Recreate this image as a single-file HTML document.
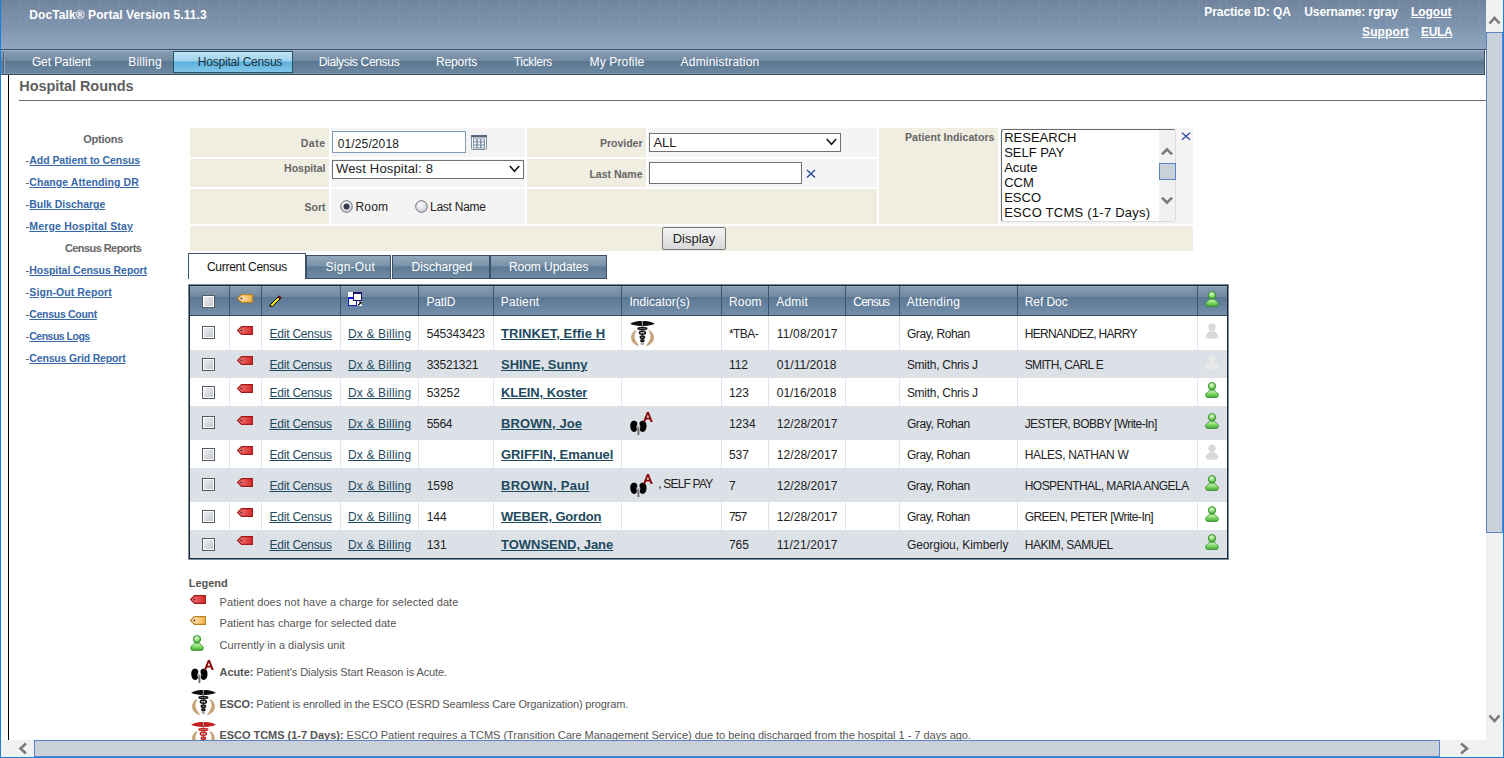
<!DOCTYPE html><html><head><meta charset="utf-8"><title>DocTalk Portal - Hospital Rounds</title><style>
html,body{margin:0;padding:0;}
body{width:1504px;height:758px;overflow:hidden;position:relative;background:#fff;font-family:"Liberation Sans",sans-serif;}
.t{position:absolute;white-space:pre;}
.b{position:absolute;}
.u{text-decoration:underline;}
</style></head><body>
<div class="b" style="left:1px;top:0px;width:1485px;height:49px;background:linear-gradient(#71849d,#7d93ad 50%,#8ea6c0);"></div>
<svg class="b" style="left:1px;top:0px" width="1485" height="49" viewBox="0 0 1485 49"><defs><pattern id="sq" width="20" height="18" patternUnits="userSpaceOnUse" x="4" y="-5"><rect x="1.5" y="1.5" width="13" height="13" rx="3" fill="none" stroke="#ffffff" stroke-opacity="0.045" stroke-width="1"/></pattern></defs><rect width="1485" height="49" fill="url(#sq)"/></svg>
<div class="b" style="left:1px;top:49px;width:1485px;height:1px;background:#3c5068;"></div>
<div class="t" style="left:29.3px;top:8px;font-size:12px;line-height:14px;font-weight:bold;color:#fff;letter-spacing:0.093px;">DocTalk® Portal Version 5.11.3</div>
<div class="t" style="left:1204.3px;top:5px;font-size:12px;line-height:14px;font-weight:bold;color:#fff;letter-spacing:-0.057px;">Practice ID: QA</div>
<div class="t" style="left:1304.3px;top:5px;font-size:12px;line-height:14px;font-weight:bold;color:#fff;letter-spacing:-0.129px;">Username: rgray</div>
<div class="t" style="left:1411px;top:5px;font-size:12px;line-height:14px;font-weight:bold;color:#fff;letter-spacing:-0.04px;text-decoration:underline;">Logout</div>
<div class="t" style="left:1362px;top:25px;font-size:12px;line-height:14px;font-weight:bold;color:#fff;letter-spacing:0.133px;text-decoration:underline;">Support</div>
<div class="t" style="left:1421px;top:25px;font-size:12px;line-height:14px;font-weight:bold;color:#fff;letter-spacing:-0.333px;text-decoration:underline;">EULA</div>
<div class="b" style="left:1px;top:50px;width:1484px;height:24px;background:linear-gradient(#9fb1c3 0px,#9fb1c3 1px,#8a9db2 1px,#7089a1 11px,#5a7690 11px,#6d89a1 23px,#7f97ad 23px);"></div>
<div class="b" style="left:1px;top:74px;width:1484px;height:1px;background:#3a4e66;"></div>
<div class="b" style="left:1484px;top:50px;width:1px;height:25px;background:#3a4e66;"></div>
<div class="b" style="left:3px;top:52px;width:1px;height:21px;background:#4a6480;"></div>
<div class="b" style="left:4px;top:52px;width:1px;height:21px;background:#8da2b6;"></div>
<div class="b" style="left:173px;top:51px;width:120px;height:22px;box-sizing:border-box;border:1px solid #1c5660;background:linear-gradient(#c2e3f5,#9fd2ee 45%,#5cb0dc 50%,#82c6e8 100%);"></div>
<div class="t" style="left:31.9px;top:55px;font-size:12px;line-height:14px;font-weight:normal;color:#fff;letter-spacing:-0.1px;">Get Patient</div>
<div class="t" style="left:128.2px;top:55px;font-size:12px;line-height:14px;font-weight:normal;color:#fff;letter-spacing:0.233px;">Billing</div>
<div class="t" style="left:318.7px;top:55px;font-size:12px;line-height:14px;font-weight:normal;color:#fff;letter-spacing:-0.314px;">Dialysis Census</div>
<div class="t" style="left:435.9px;top:55px;font-size:12px;line-height:14px;font-weight:normal;color:#fff;letter-spacing:-0.1px;">Reports</div>
<div class="t" style="left:513.8px;top:55px;font-size:12px;line-height:14px;font-weight:normal;color:#fff;letter-spacing:-0.343px;">Ticklers</div>
<div class="t" style="left:589.6px;top:55px;font-size:12px;line-height:14px;font-weight:normal;color:#fff;letter-spacing:0.133px;">My Profile</div>
<div class="t" style="left:680.6px;top:55px;font-size:12px;line-height:14px;font-weight:normal;color:#fff;letter-spacing:0.2px;">Administration</div>
<div class="t" style="left:197.7px;top:55px;font-size:12px;line-height:14px;font-weight:normal;color:#15323c;letter-spacing:-0.193px;">Hospital Census</div>
<div class="b" style="left:8px;top:75px;width:1px;height:665px;background:#000;"></div>
<div class="t" style="left:19.3px;top:78px;font-size:14.5px;line-height:17px;font-weight:bold;color:#606060;letter-spacing:-0.064px;">Hospital Rounds</div>
<div class="b" style="left:19px;top:100px;width:1467px;height:1px;background:#6e6e6e;"></div>
<div class="t" style="left:-196.8px;width:600px;text-align:center;top:133px;font-size:11px;line-height:13px;font-weight:bold;color:#666;letter-spacing:-0.233px;">Options</div>
<div class="t" style="left:25.5px;top:154px;font-size:11px;line-height:13px;font-weight:normal;color:#444;">-</div>
<div class="t" style="left:29.3px;top:154px;font-size:10.5px;line-height:13px;font-weight:bold;color:#3768a8;letter-spacing:-0.055px;text-decoration:underline;">Add Patient to Census</div>
<div class="t" style="left:25.5px;top:176px;font-size:11px;line-height:13px;font-weight:normal;color:#444;">-</div>
<div class="t" style="left:29.3px;top:176px;font-size:10.5px;line-height:13px;font-weight:bold;color:#3768a8;letter-spacing:0.078px;text-decoration:underline;">Change Attending DR</div>
<div class="t" style="left:25.5px;top:198px;font-size:11px;line-height:13px;font-weight:normal;color:#444;">-</div>
<div class="t" style="left:29.3px;top:198px;font-size:10.5px;line-height:13px;font-weight:bold;color:#3768a8;letter-spacing:-0.031px;text-decoration:underline;">Bulk Discharge</div>
<div class="t" style="left:25.5px;top:220px;font-size:11px;line-height:13px;font-weight:normal;color:#444;">-</div>
<div class="t" style="left:29.3px;top:220px;font-size:10.5px;line-height:13px;font-weight:bold;color:#3768a8;letter-spacing:0.178px;text-decoration:underline;">Merge Hospital Stay</div>
<div class="t" style="left:-196.9px;width:600px;text-align:center;top:242px;font-size:11px;line-height:13px;font-weight:bold;color:#666;letter-spacing:-0.569px;">Census Reports</div>
<div class="t" style="left:25.5px;top:264px;font-size:11px;line-height:13px;font-weight:normal;color:#444;">-</div>
<div class="t" style="left:29.3px;top:264px;font-size:10.5px;line-height:13px;font-weight:bold;color:#3768a8;letter-spacing:-0.057px;text-decoration:underline;">Hospital Census Report</div>
<div class="t" style="left:25.5px;top:286px;font-size:11px;line-height:13px;font-weight:normal;color:#444;">-</div>
<div class="t" style="left:29.3px;top:286px;font-size:10.5px;line-height:13px;font-weight:bold;color:#3768a8;letter-spacing:0.093px;text-decoration:underline;">Sign-Out Report</div>
<div class="t" style="left:25.5px;top:308px;font-size:11px;line-height:13px;font-weight:normal;color:#444;">-</div>
<div class="t" style="left:29.3px;top:308px;font-size:10.5px;line-height:13px;font-weight:bold;color:#3768a8;letter-spacing:-0.3px;text-decoration:underline;">Census Count</div>
<div class="t" style="left:25.5px;top:330px;font-size:11px;line-height:13px;font-weight:normal;color:#444;">-</div>
<div class="t" style="left:29.3px;top:330px;font-size:10.5px;line-height:13px;font-weight:bold;color:#3768a8;letter-spacing:-0.51px;text-decoration:underline;">Census Logs</div>
<div class="t" style="left:25.5px;top:352px;font-size:11px;line-height:13px;font-weight:normal;color:#444;">-</div>
<div class="t" style="left:29.3px;top:352px;font-size:10.5px;line-height:13px;font-weight:bold;color:#3768a8;letter-spacing:-0.165px;text-decoration:underline;">Census Grid Report</div>
<div class="b" style="left:190px;top:128px;width:139px;height:29px;background:#f0eee1;"></div>
<div class="b" style="left:331px;top:128px;width:194px;height:29px;background:#f4f4f4;"></div>
<div class="b" style="left:527px;top:128px;width:119px;height:29px;background:#f0eee1;"></div>
<div class="b" style="left:648px;top:128px;width:229px;height:29px;background:#f4f4f4;"></div>
<div class="b" style="left:190px;top:159px;width:139px;height:28px;background:#f0eee1;"></div>
<div class="b" style="left:331px;top:159px;width:194px;height:28px;background:#f4f4f4;"></div>
<div class="b" style="left:527px;top:159px;width:119px;height:28px;background:#f0eee1;"></div>
<div class="b" style="left:648px;top:159px;width:229px;height:28px;background:#f4f4f4;"></div>
<div class="b" style="left:190px;top:189px;width:139px;height:35px;background:#f0eee1;"></div>
<div class="b" style="left:331px;top:189px;width:194px;height:35px;background:#f4f4f4;"></div>
<div class="b" style="left:527px;top:189px;width:350px;height:35px;background:#f0eee1;"></div>
<div class="b" style="left:879px;top:128px;width:119px;height:96px;background:#f0eee1;"></div>
<div class="b" style="left:1000px;top:128px;width:193px;height:96px;background:#f4f4f4;"></div>
<div class="b" style="left:190px;top:226px;width:1003px;height:25px;background:#f0eee1;"></div>
<div class="t" style="right:1178.5px;text-align:right;top:137px;font-size:10.5px;line-height:13px;font-weight:bold;color:#666;letter-spacing:0.5px;">Date</div>
<div class="t" style="right:1178.5px;text-align:right;top:162px;font-size:10.5px;line-height:13px;font-weight:bold;color:#666;">Hospital</div>
<div class="t" style="right:1178.5px;text-align:right;top:201px;font-size:10.5px;line-height:13px;font-weight:bold;color:#666;">Sort</div>
<div class="t" style="right:861.5px;text-align:right;top:137px;font-size:10.5px;line-height:13px;font-weight:bold;color:#666;">Provider</div>
<div class="t" style="right:861.5px;text-align:right;top:168px;font-size:10.5px;line-height:13px;font-weight:bold;color:#666;">Last Name</div>
<div class="t" style="right:509.5px;text-align:right;top:131px;font-size:10.5px;line-height:13px;font-weight:bold;color:#666;letter-spacing:0.082px;">Patient Indicators</div>
<div class="b" style="left:332px;top:131px;width:134px;height:22px;box-sizing:border-box;border:1px solid #7f9cba;background:#fff;"></div>
<div class="t" style="left:337.8px;top:137px;font-size:12px;line-height:14px;font-weight:normal;color:#222;letter-spacing:0.111px;">01/25/2018</div>
<svg class="b" style="left:471px;top:135px" width="16" height="15" viewBox="0 0 16 15"><rect x="0.5" y="0.5" width="15" height="14" rx="1.5" fill="#fff" stroke="#7d91a5"/><rect x="0" y="0" width="16" height="2.5" fill="#56687a"/><rect x="2" y="3.5" width="12" height="10" fill="#7d91a5"/><rect x="3.0" y="4.3" width="2.2" height="2" fill="#fff"/><rect x="6.8" y="4.3" width="2.2" height="2" fill="#fff"/><rect x="10.6" y="4.3" width="2.2" height="2" fill="#fff"/><rect x="3.0" y="7.4" width="2.2" height="2" fill="#fff"/><rect x="6.8" y="7.4" width="2.2" height="2" fill="#fff"/><rect x="10.6" y="7.4" width="2.2" height="2" fill="#fff"/><rect x="3.0" y="10.5" width="2.2" height="2" fill="#fff"/><rect x="6.8" y="10.5" width="2.2" height="2" fill="#fff"/><rect x="10.6" y="10.5" width="2.2" height="2" fill="#fff"/></svg>
<div class="b" style="left:332px;top:160px;width:192px;height:19px;box-sizing:border-box;border:1px solid #707070;background:#fff;"></div>
<div class="t" style="left:336px;top:161px;font-size:13px;line-height:16px;font-weight:normal;color:#222;letter-spacing:0.167px;">West Hospital: 8</div>
<svg class="b" style="left:509px;top:165px" width="11" height="8" viewBox="0 0 11 8"><polyline points="0.8,1 5.5,6.2 10.2,1" fill="none" stroke="#1a1a1a" stroke-width="1.7"/></svg>
<svg class="b" style="left:339.5px;top:199.7px" width="13" height="13" viewBox="0 0 13 13"><defs><radialGradient id="rg346" cx="40%" cy="35%" r="70%"><stop offset="0" stop-color="#ffffff"/><stop offset="1" stop-color="#c8ccd4"/></radialGradient></defs><circle cx="6.5" cy="6.5" r="5.8" fill="url(#rg346)" stroke="#6b6f76" stroke-width="1"/><circle cx="6.5" cy="6.5" r="3" fill="#333c48"/></svg>
<svg class="b" style="left:414.5px;top:199.7px" width="13" height="13" viewBox="0 0 13 13"><defs><radialGradient id="rg421" cx="40%" cy="35%" r="70%"><stop offset="0" stop-color="#ffffff"/><stop offset="1" stop-color="#c8ccd4"/></radialGradient></defs><circle cx="6.5" cy="6.5" r="5.8" fill="url(#rg421)" stroke="#6b6f76" stroke-width="1"/></svg>
<div class="t" style="left:355.5px;top:200px;font-size:12px;line-height:14px;font-weight:normal;color:#222;letter-spacing:0.2px;">Room</div>
<div class="t" style="left:430px;top:200px;font-size:12px;line-height:14px;font-weight:normal;color:#222;letter-spacing:-0.25px;">Last Name</div>
<div class="b" style="left:649px;top:133px;width:192px;height:19px;box-sizing:border-box;border:1px solid #707070;background:#fff;"></div>
<div class="t" style="left:653.4px;top:135px;font-size:13px;line-height:16px;font-weight:normal;color:#222;">ALL</div>
<svg class="b" style="left:826px;top:138px" width="11" height="8" viewBox="0 0 11 8"><polyline points="0.8,1 5.5,6.2 10.2,1" fill="none" stroke="#1a1a1a" stroke-width="1.7"/></svg>
<div class="b" style="left:649px;top:162px;width:153px;height:22px;box-sizing:border-box;border:1px solid #707070;background:#fff;"></div>
<svg class="b" style="left:806px;top:168.5px" width="10" height="9.5" viewBox="0 0 10 9.5"><path d="M1,1 L9,8.5 M9,1 L1,8.5" stroke="#2a4a9a" stroke-width="1.4" fill="none"/></svg>
<div class="b" style="left:1001px;top:129px;width:175px;height:93px;box-sizing:border-box;border:1px solid #dadada;border-top-color:#6a6a6a;border-left-color:#6a6a6a;border-radius:3px;background:#fff;"></div>
<div class="b" style="left:1159px;top:130px;width:16px;height:91px;background:#f0f1f3;"></div>
<div class="t" style="left:1004.2px;top:130px;font-size:13px;line-height:16px;font-weight:normal;color:#111;">RESEARCH</div>
<div class="t" style="left:1004.2px;top:145px;font-size:13px;line-height:16px;font-weight:normal;color:#111;">SELF PAY</div>
<div class="t" style="left:1004.2px;top:160px;font-size:13px;line-height:16px;font-weight:normal;color:#111;">Acute</div>
<div class="t" style="left:1004.2px;top:175px;font-size:13px;line-height:16px;font-weight:normal;color:#111;">CCM</div>
<div class="t" style="left:1004.2px;top:190px;font-size:13px;line-height:16px;font-weight:normal;color:#111;">ESCO</div>
<div class="t" style="left:1004.2px;top:205px;font-size:13px;line-height:16px;font-weight:normal;color:#111;letter-spacing:0.242px;">ESCO TCMS (1-7 Days)</div>
<svg class="b" style="left:1159px;top:145px" width="17" height="12" viewBox="0 0 17 12"><polyline points="3,9.3 8,4.3 13,9.3" fill="none" stroke="#7a7a7a" stroke-width="2.6"/></svg>
<svg class="b" style="left:1159px;top:194px" width="17" height="12" viewBox="0 0 17 12"><polyline points="3,3.7 8,8.7 13,3.7" fill="none" stroke="#7a7a7a" stroke-width="2.6"/></svg>
<div class="b" style="left:1159px;top:163px;width:17px;height:17px;box-sizing:border-box;border:1px solid #5b84c4;background:#c9d0da;"></div>
<svg class="b" style="left:1180.5px;top:132px" width="10" height="8.5" viewBox="0 0 10 8.5"><path d="M1,0.8 L9,7.7 M9,0.8 L1,7.7" stroke="#21449a" stroke-width="1.2" fill="none"/></svg>
<div class="b" style="left:662px;top:227px;width:64px;height:23px;box-sizing:border-box;border:1px solid #777;border-radius:2px;background:linear-gradient(#f4f4f4,#e6e6e6 50%,#d8d8d8);"></div>
<div class="t" style="left:394px;width:600px;text-align:center;top:231px;font-size:13px;line-height:16px;font-weight:normal;color:#222;">Display</div>
<div class="b" style="left:188px;top:253px;width:118px;height:26px;box-sizing:border-box;border:1px solid #3b5570;border-bottom:none;background:#fff;"></div>
<div class="t" style="left:207px;top:260px;font-size:12px;line-height:14px;font-weight:normal;color:#111;letter-spacing:-0.292px;">Current Census</div>
<div class="b" style="left:306px;top:255px;width:85px;height:24px;box-sizing:border-box;border:1px solid #3b5068;background:linear-gradient(#93a8bc,#7a92a9 45%,#5d7a94 50%,#6f8ba4 100%);"></div>
<div class="t" style="left:325.5px;top:260px;font-size:12px;line-height:14px;font-weight:normal;color:#fff;letter-spacing:0.271px;">Sign-Out</div>
<div class="b" style="left:392px;top:255px;width:98px;height:24px;box-sizing:border-box;border:1px solid #3b5068;background:linear-gradient(#93a8bc,#7a92a9 45%,#5d7a94 50%,#6f8ba4 100%);"></div>
<div class="t" style="left:411.6px;top:260px;font-size:12px;line-height:14px;font-weight:normal;color:#fff;letter-spacing:-0.011px;">Discharged</div>
<div class="b" style="left:490px;top:255px;width:117px;height:24px;box-sizing:border-box;border:1px solid #3b5068;background:linear-gradient(#93a8bc,#7a92a9 45%,#5d7a94 50%,#6f8ba4 100%);"></div>
<div class="t" style="left:509px;top:260px;font-size:12px;line-height:14px;font-weight:normal;color:#fff;letter-spacing:-0.055px;">Room Updates</div>
<div class="b" style="left:188px;top:284px;width:1041px;height:276px;background:#7590ad;"></div>
<div class="b" style="left:189px;top:285px;width:1039px;height:274px;background:#242628;"></div>
<div class="b" style="left:190px;top:286px;width:1037px;height:29px;background:linear-gradient(#9fb2c5 0px,#889db2 1px,#6f879f 11px,#5a7691 11px,#6783a0 20px,#7590a9 29px);"></div>
<div class="b" style="left:190px;top:315px;width:1037px;height:1px;background:#34495f;"></div>
<div class="b" style="left:229px;top:286px;width:1px;height:29px;background:#3d546c;"></div>
<div class="b" style="left:261px;top:286px;width:1px;height:29px;background:#3d546c;"></div>
<div class="b" style="left:340px;top:286px;width:1px;height:29px;background:#3d546c;"></div>
<div class="b" style="left:418px;top:286px;width:1px;height:29px;background:#3d546c;"></div>
<div class="b" style="left:493px;top:286px;width:1px;height:29px;background:#3d546c;"></div>
<div class="b" style="left:621px;top:286px;width:1px;height:29px;background:#3d546c;"></div>
<div class="b" style="left:721px;top:286px;width:1px;height:29px;background:#3d546c;"></div>
<div class="b" style="left:768px;top:286px;width:1px;height:29px;background:#3d546c;"></div>
<div class="b" style="left:845px;top:286px;width:1px;height:29px;background:#3d546c;"></div>
<div class="b" style="left:899px;top:286px;width:1px;height:29px;background:#3d546c;"></div>
<div class="b" style="left:1017px;top:286px;width:1px;height:29px;background:#3d546c;"></div>
<div class="b" style="left:1197px;top:286px;width:1px;height:29px;background:#3d546c;"></div>
<div class="b" style="left:190px;top:316px;width:1037px;height:34px;background:#ffffff;"></div>
<div class="b" style="left:229px;top:316px;width:1px;height:34px;background:#dfe5ec;"></div>
<div class="b" style="left:261px;top:316px;width:1px;height:34px;background:#dfe5ec;"></div>
<div class="b" style="left:340px;top:316px;width:1px;height:34px;background:#dfe5ec;"></div>
<div class="b" style="left:418px;top:316px;width:1px;height:34px;background:#dfe5ec;"></div>
<div class="b" style="left:493px;top:316px;width:1px;height:34px;background:#dfe5ec;"></div>
<div class="b" style="left:621px;top:316px;width:1px;height:34px;background:#dfe5ec;"></div>
<div class="b" style="left:721px;top:316px;width:1px;height:34px;background:#dfe5ec;"></div>
<div class="b" style="left:768px;top:316px;width:1px;height:34px;background:#dfe5ec;"></div>
<div class="b" style="left:845px;top:316px;width:1px;height:34px;background:#dfe5ec;"></div>
<div class="b" style="left:899px;top:316px;width:1px;height:34px;background:#dfe5ec;"></div>
<div class="b" style="left:1017px;top:316px;width:1px;height:34px;background:#dfe5ec;"></div>
<div class="b" style="left:1197px;top:316px;width:1px;height:34px;background:#dfe5ec;"></div>
<div class="b" style="left:190px;top:350px;width:1037px;height:28px;background:#dce1e8;"></div>
<div class="b" style="left:190px;top:378px;width:1037px;height:28px;background:#ffffff;"></div>
<div class="b" style="left:229px;top:378px;width:1px;height:28px;background:#dfe5ec;"></div>
<div class="b" style="left:261px;top:378px;width:1px;height:28px;background:#dfe5ec;"></div>
<div class="b" style="left:340px;top:378px;width:1px;height:28px;background:#dfe5ec;"></div>
<div class="b" style="left:418px;top:378px;width:1px;height:28px;background:#dfe5ec;"></div>
<div class="b" style="left:493px;top:378px;width:1px;height:28px;background:#dfe5ec;"></div>
<div class="b" style="left:621px;top:378px;width:1px;height:28px;background:#dfe5ec;"></div>
<div class="b" style="left:721px;top:378px;width:1px;height:28px;background:#dfe5ec;"></div>
<div class="b" style="left:768px;top:378px;width:1px;height:28px;background:#dfe5ec;"></div>
<div class="b" style="left:845px;top:378px;width:1px;height:28px;background:#dfe5ec;"></div>
<div class="b" style="left:899px;top:378px;width:1px;height:28px;background:#dfe5ec;"></div>
<div class="b" style="left:1017px;top:378px;width:1px;height:28px;background:#dfe5ec;"></div>
<div class="b" style="left:1197px;top:378px;width:1px;height:28px;background:#dfe5ec;"></div>
<div class="b" style="left:190px;top:406px;width:1037px;height:34px;background:#dce1e8;"></div>
<div class="b" style="left:190px;top:440px;width:1037px;height:28px;background:#ffffff;"></div>
<div class="b" style="left:229px;top:440px;width:1px;height:28px;background:#dfe5ec;"></div>
<div class="b" style="left:261px;top:440px;width:1px;height:28px;background:#dfe5ec;"></div>
<div class="b" style="left:340px;top:440px;width:1px;height:28px;background:#dfe5ec;"></div>
<div class="b" style="left:418px;top:440px;width:1px;height:28px;background:#dfe5ec;"></div>
<div class="b" style="left:493px;top:440px;width:1px;height:28px;background:#dfe5ec;"></div>
<div class="b" style="left:621px;top:440px;width:1px;height:28px;background:#dfe5ec;"></div>
<div class="b" style="left:721px;top:440px;width:1px;height:28px;background:#dfe5ec;"></div>
<div class="b" style="left:768px;top:440px;width:1px;height:28px;background:#dfe5ec;"></div>
<div class="b" style="left:845px;top:440px;width:1px;height:28px;background:#dfe5ec;"></div>
<div class="b" style="left:899px;top:440px;width:1px;height:28px;background:#dfe5ec;"></div>
<div class="b" style="left:1017px;top:440px;width:1px;height:28px;background:#dfe5ec;"></div>
<div class="b" style="left:1197px;top:440px;width:1px;height:28px;background:#dfe5ec;"></div>
<div class="b" style="left:190px;top:468px;width:1037px;height:34px;background:#dce1e8;"></div>
<div class="b" style="left:190px;top:502px;width:1037px;height:28px;background:#ffffff;"></div>
<div class="b" style="left:229px;top:502px;width:1px;height:28px;background:#dfe5ec;"></div>
<div class="b" style="left:261px;top:502px;width:1px;height:28px;background:#dfe5ec;"></div>
<div class="b" style="left:340px;top:502px;width:1px;height:28px;background:#dfe5ec;"></div>
<div class="b" style="left:418px;top:502px;width:1px;height:28px;background:#dfe5ec;"></div>
<div class="b" style="left:493px;top:502px;width:1px;height:28px;background:#dfe5ec;"></div>
<div class="b" style="left:621px;top:502px;width:1px;height:28px;background:#dfe5ec;"></div>
<div class="b" style="left:721px;top:502px;width:1px;height:28px;background:#dfe5ec;"></div>
<div class="b" style="left:768px;top:502px;width:1px;height:28px;background:#dfe5ec;"></div>
<div class="b" style="left:845px;top:502px;width:1px;height:28px;background:#dfe5ec;"></div>
<div class="b" style="left:899px;top:502px;width:1px;height:28px;background:#dfe5ec;"></div>
<div class="b" style="left:1017px;top:502px;width:1px;height:28px;background:#dfe5ec;"></div>
<div class="b" style="left:1197px;top:502px;width:1px;height:28px;background:#dfe5ec;"></div>
<div class="b" style="left:190px;top:530px;width:1037px;height:28px;background:#dce1e8;"></div>
<div class="t" style="left:426.6px;top:295px;font-size:12px;line-height:14px;font-weight:normal;color:#fff;letter-spacing:-0.275px;">PatID</div>
<div class="t" style="left:500.8px;top:295px;font-size:12px;line-height:14px;font-weight:normal;color:#fff;letter-spacing:0.15px;">Patient</div>
<div class="t" style="left:629.5px;top:295px;font-size:12px;line-height:14px;font-weight:normal;color:#fff;letter-spacing:0.018px;">Indicator(s)</div>
<div class="t" style="left:728.9px;top:295px;font-size:12px;line-height:14px;font-weight:normal;color:#fff;letter-spacing:0.2px;">Room</div>
<div class="t" style="left:776.2px;top:295px;font-size:12px;line-height:14px;font-weight:normal;color:#fff;letter-spacing:0.225px;">Admit</div>
<div class="t" style="left:853.3px;top:295px;font-size:12px;line-height:14px;font-weight:normal;color:#fff;letter-spacing:-0.78px;">Census</div>
<div class="t" style="left:906.7px;top:295px;font-size:12px;line-height:14px;font-weight:normal;color:#fff;letter-spacing:0.325px;">Attending</div>
<div class="t" style="left:1024.7px;top:295px;font-size:12px;line-height:14px;font-weight:normal;color:#fff;letter-spacing:-0.067px;">Ref Doc</div>
<svg class="b" style="left:202px;top:295px" width="13" height="13" viewBox="0 0 13 13"><defs><linearGradient id="cbg" x1="0" y1="0" x2="1" y2="1"><stop offset="0" stop-color="#eceef1"/><stop offset="1" stop-color="#c3c7ce"/></linearGradient></defs><rect x="0.5" y="0.5" width="12" height="12" fill="#fff" stroke="#555a60"/><rect x="2" y="2" width="9" height="9" fill="url(#cbg)"/></svg>
<svg class="b" style="left:237px;top:294px" width="16" height="9" viewBox="0 0 16 9"><defs><linearGradient id="tgyellow237294" x1="0" y1="0" x2="1" y2="0"><stop offset="0" stop-color="#fff0c8"/><stop offset="1" stop-color="#f2b24a"/></linearGradient></defs><path d="M0.6,4.5 L4.5,0.6 L15.4,0.6 L15.4,8.4 L4.5,8.4 Z" fill="url(#tgyellow237294)" stroke="#b9801e" stroke-width="1.1"/><circle cx="4.3" cy="4.5" r="0.9" fill="#5a2a2a"/></svg>
<svg class="b" style="left:269px;top:293.5px" width="13" height="13" viewBox="0 0 13 13"><path d="M1.5,10.5 L9,3 L11,5 L3.5,12.5 L0.5,12 Z" fill="#e8e020" stroke="#000" stroke-width="1"/><path d="M9,3 L10.2,1.8 L12.2,3.8 L11,5 Z" fill="#e02020" stroke="#000" stroke-width="0.8"/><path d="M0.5,12 L1.5,10.5 L2.5,11.5 Z" fill="#333"/></svg>
<svg class="b" style="left:347px;top:291px" width="16" height="16" viewBox="0 0 16 16"><rect x="1" y="1" width="5" height="5" fill="#fff"/><rect x="1.5" y="6.5" width="8" height="8" fill="#fff" stroke="#0a1acc" stroke-width="1"/><rect x="1" y="6" width="9" height="2" fill="#0a1acc"/><rect x="6.5" y="1.5" width="8" height="8" fill="#fff" stroke="#1c1670" stroke-width="1"/><rect x="6" y="1" width="9" height="2" fill="#1c1670"/><rect x="10" y="10" width="5" height="5" fill="#fff"/><path d="M11,14.5 L13.5,12" stroke="#000" stroke-width="1.1"/><path d="M11.5,10.6 L14.6,10.6 L14.6,13.7 Z" fill="#000"/></svg>
<svg class="b" style="left:1205px;top:291px" width="14" height="16" viewBox="0 0 14 16"><defs><linearGradient id="pg12050_2910" x1="0" y1="0" x2="0" y2="1"><stop offset="0" stop-color="#c9f3b9"/><stop offset="0.45" stop-color="#86dc6c"/><stop offset="1" stop-color="#3f9e31"/></linearGradient><radialGradient id="ph12050_2910" cx="45%" cy="35%" r="65%"><stop offset="0" stop-color="#e6fbe0"/><stop offset="0.6" stop-color="#7fd566"/><stop offset="1" stop-color="#3c9a2e"/></radialGradient></defs><path d="M4.6,8.2 C3.4,9 2.6,10 1.6,11 C0.3,12.2 0.2,14.5 1.8,15.2 C3,15.7 5,15.8 7,15.8 C9,15.8 11,15.7 12.2,15.2 C13.8,14.5 13.7,12.2 12.4,11 C11.4,10 10.6,9 9.4,8.2 Z" fill="url(#pg12050_2910)" stroke="#2f8a24" stroke-width="0.8"/><circle cx="7" cy="4.2" r="3.7" fill="url(#ph12050_2910)" stroke="#2f8a24" stroke-width="0.8"/></svg>
<svg class="b" style="left:202px;top:326px" width="13" height="13" viewBox="0 0 13 13"><defs><linearGradient id="cbg" x1="0" y1="0" x2="1" y2="1"><stop offset="0" stop-color="#eceef1"/><stop offset="1" stop-color="#c3c7ce"/></linearGradient></defs><rect x="0.5" y="0.5" width="12" height="12" fill="#fff" stroke="#555a60"/><rect x="2" y="2" width="9" height="9" fill="url(#cbg)"/></svg>
<svg class="b" style="left:237px;top:326px" width="16" height="9" viewBox="0 0 16 9"><defs><linearGradient id="tgred237326" x1="0" y1="0" x2="1" y2="0"><stop offset="0" stop-color="#f47c7c"/><stop offset="1" stop-color="#d62a2a"/></linearGradient></defs><path d="M0.6,4.5 L4.5,0.6 L15.4,0.6 L15.4,8.4 L4.5,8.4 Z" fill="url(#tgred237326)" stroke="#9e1a1a" stroke-width="1.1"/><circle cx="4.3" cy="4.5" r="0.9" fill="#5a2a2a"/></svg>
<div class="t" style="left:269.4px;top:327px;font-size:12px;line-height:14px;font-weight:normal;color:#1e4a5e;letter-spacing:-0.2px;text-decoration:underline;">Edit Census</div>
<div class="t" style="left:348px;top:327px;font-size:12px;line-height:14px;font-weight:normal;color:#1e4a5e;letter-spacing:0.155px;text-decoration:underline;">Dx &amp; Billing</div>
<div class="t" style="left:426.7px;top:327px;font-size:12px;line-height:14px;font-weight:normal;color:#222;letter-spacing:-0.213px;">545343423</div>
<div class="t" style="left:501px;top:326px;font-size:13px;line-height:16px;font-weight:bold;color:#1e4a5e;letter-spacing:0.053px;text-decoration:underline;">TRINKET, Effie H</div>
<svg class="b" style="left:629.5px;top:319.5px" width="25" height="27" viewBox="0 0 25 27"><g><path d="M5.3,10.3 C2.3,12.2 0.6,15.5 1.2,19.2 C1.8,22.6 5.3,25 9.2,26.3 C8.4,24.6 6.5,22.2 5.1,19.6 C4,17.2 4.3,13.6 6.6,10.6 Z" fill="#c7a579"/><path d="M19.7,10.3 C22.7,12.2 24.4,15.5 23.8,19.2 C23.2,22.6 19.7,25 15.8,26.3 C16.6,24.6 18.5,22.2 19.9,19.6 C21,17.2 20.7,13.6 18.4,10.6 Z" fill="#c7a579"/><path d="M12.4,1.4 C9.5,0.6 5,1 0.1,3.8 C3,5.2 6.5,5.8 10.5,6.1 L12.4,6.1 Z" fill="#111"/><path d="M12.6,1.4 C15.5,0.6 20,1 24.9,3.8 C22,5.2 18.5,5.8 14.5,6.1 L12.6,6.1 Z" fill="#111"/><rect x="11.8" y="1.2" width="1.1" height="23.5" fill="#8a8a8a"/><ellipse cx="12.4" cy="8.5" rx="4.4" ry="1.0" fill="none" stroke="#111" stroke-width="1.5"/><ellipse cx="12.4" cy="12.85" rx="3.0" ry="1.5" fill="none" stroke="#111" stroke-width="1.5"/><ellipse cx="12.4" cy="17.3" rx="2.1" ry="1.2" fill="none" stroke="#111" stroke-width="1.5"/><ellipse cx="12.4" cy="20.65" rx="1.6" ry="1.0" fill="none" stroke="#111" stroke-width="1.5"/><ellipse cx="12.4" cy="23.7" rx="1.3" ry="0.7" fill="none" stroke="#b0b0b0" stroke-width="1.5"/></g></svg>
<div class="t" style="left:728.9px;top:327px;font-size:12px;line-height:14px;font-weight:normal;color:#222;letter-spacing:-0.525px;">*TBA-</div>
<div class="t" style="left:776.8px;top:327px;font-size:12px;line-height:14px;font-weight:normal;color:#222;letter-spacing:0.167px;">11/08/2017</div>
<div class="t" style="left:906.9px;top:327px;font-size:12px;line-height:14px;font-weight:normal;color:#222;letter-spacing:-0.38px;">Gray, Rohan</div>
<div class="t" style="left:1024.7px;top:327px;font-size:12px;line-height:14px;font-weight:normal;color:#222;letter-spacing:-0.687px;">HERNANDEZ, HARRY</div>
<svg class="b" style="left:1205px;top:323px" width="14" height="16" viewBox="0 0 14 16"><path d="M4.6,8.2 C3.4,9 2.6,10 1.6,11 C0.3,12.2 0.2,14.5 1.8,15.2 C3,15.7 5,15.8 7,15.8 C9,15.8 11,15.7 12.2,15.2 C13.8,14.5 13.7,12.2 12.4,11 C11.4,10 10.6,9 9.4,8.2 Z" fill="#d9d9d9" /><circle cx="7" cy="4.2" r="3.7" fill="#d9d9d9" /></svg>
<svg class="b" style="left:202px;top:358px" width="13" height="13" viewBox="0 0 13 13"><defs><linearGradient id="cbg" x1="0" y1="0" x2="1" y2="1"><stop offset="0" stop-color="#eceef1"/><stop offset="1" stop-color="#c3c7ce"/></linearGradient></defs><rect x="0.5" y="0.5" width="12" height="12" fill="#fff" stroke="#555a60"/><rect x="2" y="2" width="9" height="9" fill="url(#cbg)"/></svg>
<svg class="b" style="left:237px;top:356px" width="16" height="9" viewBox="0 0 16 9"><defs><linearGradient id="tgred237356" x1="0" y1="0" x2="1" y2="0"><stop offset="0" stop-color="#f47c7c"/><stop offset="1" stop-color="#d62a2a"/></linearGradient></defs><path d="M0.6,4.5 L4.5,0.6 L15.4,0.6 L15.4,8.4 L4.5,8.4 Z" fill="url(#tgred237356)" stroke="#9e1a1a" stroke-width="1.1"/><circle cx="4.3" cy="4.5" r="0.9" fill="#5a2a2a"/></svg>
<div class="t" style="left:269.4px;top:358px;font-size:12px;line-height:14px;font-weight:normal;color:#1e4a5e;letter-spacing:-0.2px;text-decoration:underline;">Edit Census</div>
<div class="t" style="left:348px;top:358px;font-size:12px;line-height:14px;font-weight:normal;color:#1e4a5e;letter-spacing:0.155px;text-decoration:underline;">Dx &amp; Billing</div>
<div class="t" style="left:426.7px;top:358px;font-size:12px;line-height:14px;font-weight:normal;color:#222;letter-spacing:-0.243px;">33521321</div>
<div class="t" style="left:501px;top:357px;font-size:13px;line-height:16px;font-weight:bold;color:#1e4a5e;letter-spacing:-0.018px;text-decoration:underline;">SHINE, Sunny</div>
<div class="t" style="left:728.9px;top:358px;font-size:12px;line-height:14px;font-weight:normal;color:#222;">112</div>
<div class="t" style="left:776.8px;top:358px;font-size:12px;line-height:14px;font-weight:normal;color:#222;letter-spacing:0.056px;">01/11/2018</div>
<div class="t" style="left:906.9px;top:358px;font-size:12px;line-height:14px;font-weight:normal;color:#222;letter-spacing:-0.277px;">Smith, Chris J</div>
<div class="t" style="left:1024.7px;top:358px;font-size:12px;line-height:14px;font-weight:normal;color:#222;letter-spacing:-0.65px;">SMITH, CARL E</div>
<svg class="b" style="left:1205px;top:354px" width="14" height="16" viewBox="0 0 14 16"><path d="M4.6,8.2 C3.4,9 2.6,10 1.6,11 C0.3,12.2 0.2,14.5 1.8,15.2 C3,15.7 5,15.8 7,15.8 C9,15.8 11,15.7 12.2,15.2 C13.8,14.5 13.7,12.2 12.4,11 C11.4,10 10.6,9 9.4,8.2 Z" fill="#e9e9e9" /><circle cx="7" cy="4.2" r="3.7" fill="#e9e9e9" /></svg>
<svg class="b" style="left:202px;top:386px" width="13" height="13" viewBox="0 0 13 13"><defs><linearGradient id="cbg" x1="0" y1="0" x2="1" y2="1"><stop offset="0" stop-color="#eceef1"/><stop offset="1" stop-color="#c3c7ce"/></linearGradient></defs><rect x="0.5" y="0.5" width="12" height="12" fill="#fff" stroke="#555a60"/><rect x="2" y="2" width="9" height="9" fill="url(#cbg)"/></svg>
<svg class="b" style="left:237px;top:384px" width="16" height="9" viewBox="0 0 16 9"><defs><linearGradient id="tgred237384" x1="0" y1="0" x2="1" y2="0"><stop offset="0" stop-color="#f47c7c"/><stop offset="1" stop-color="#d62a2a"/></linearGradient></defs><path d="M0.6,4.5 L4.5,0.6 L15.4,0.6 L15.4,8.4 L4.5,8.4 Z" fill="url(#tgred237384)" stroke="#9e1a1a" stroke-width="1.1"/><circle cx="4.3" cy="4.5" r="0.9" fill="#5a2a2a"/></svg>
<div class="t" style="left:269.4px;top:386px;font-size:12px;line-height:14px;font-weight:normal;color:#1e4a5e;letter-spacing:-0.2px;text-decoration:underline;">Edit Census</div>
<div class="t" style="left:348px;top:386px;font-size:12px;line-height:14px;font-weight:normal;color:#1e4a5e;letter-spacing:0.155px;text-decoration:underline;">Dx &amp; Billing</div>
<div class="t" style="left:426.7px;top:386px;font-size:12px;line-height:14px;font-weight:normal;color:#222;letter-spacing:-0.05px;">53252</div>
<div class="t" style="left:501px;top:385px;font-size:13px;line-height:16px;font-weight:bold;color:#1e4a5e;letter-spacing:-0.083px;text-decoration:underline;">KLEIN, Koster</div>
<div class="t" style="left:728.9px;top:386px;font-size:12px;line-height:14px;font-weight:normal;color:#222;">123</div>
<div class="t" style="left:776.8px;top:386px;font-size:12px;line-height:14px;font-weight:normal;color:#222;letter-spacing:-0.056px;">01/16/2018</div>
<div class="t" style="left:906.9px;top:386px;font-size:12px;line-height:14px;font-weight:normal;color:#222;letter-spacing:-0.277px;">Smith, Chris J</div>
<div class="t" style="left:1024.7px;top:386px;font-size:12px;line-height:14px;font-weight:normal;color:#222;"></div>
<svg class="b" style="left:1205px;top:382px" width="14" height="16" viewBox="0 0 14 16"><defs><linearGradient id="pg12050_3820" x1="0" y1="0" x2="0" y2="1"><stop offset="0" stop-color="#c9f3b9"/><stop offset="0.45" stop-color="#86dc6c"/><stop offset="1" stop-color="#3f9e31"/></linearGradient><radialGradient id="ph12050_3820" cx="45%" cy="35%" r="65%"><stop offset="0" stop-color="#e6fbe0"/><stop offset="0.6" stop-color="#7fd566"/><stop offset="1" stop-color="#3c9a2e"/></radialGradient></defs><path d="M4.6,8.2 C3.4,9 2.6,10 1.6,11 C0.3,12.2 0.2,14.5 1.8,15.2 C3,15.7 5,15.8 7,15.8 C9,15.8 11,15.7 12.2,15.2 C13.8,14.5 13.7,12.2 12.4,11 C11.4,10 10.6,9 9.4,8.2 Z" fill="url(#pg12050_3820)" stroke="#2f8a24" stroke-width="0.8"/><circle cx="7" cy="4.2" r="3.7" fill="url(#ph12050_3820)" stroke="#2f8a24" stroke-width="0.8"/></svg>
<svg class="b" style="left:202px;top:416px" width="13" height="13" viewBox="0 0 13 13"><defs><linearGradient id="cbg" x1="0" y1="0" x2="1" y2="1"><stop offset="0" stop-color="#eceef1"/><stop offset="1" stop-color="#c3c7ce"/></linearGradient></defs><rect x="0.5" y="0.5" width="12" height="12" fill="#fff" stroke="#555a60"/><rect x="2" y="2" width="9" height="9" fill="url(#cbg)"/></svg>
<svg class="b" style="left:237px;top:416px" width="16" height="9" viewBox="0 0 16 9"><defs><linearGradient id="tgred237416" x1="0" y1="0" x2="1" y2="0"><stop offset="0" stop-color="#f47c7c"/><stop offset="1" stop-color="#d62a2a"/></linearGradient></defs><path d="M0.6,4.5 L4.5,0.6 L15.4,0.6 L15.4,8.4 L4.5,8.4 Z" fill="url(#tgred237416)" stroke="#9e1a1a" stroke-width="1.1"/><circle cx="4.3" cy="4.5" r="0.9" fill="#5a2a2a"/></svg>
<div class="t" style="left:269.4px;top:417px;font-size:12px;line-height:14px;font-weight:normal;color:#1e4a5e;letter-spacing:-0.2px;text-decoration:underline;">Edit Census</div>
<div class="t" style="left:348px;top:417px;font-size:12px;line-height:14px;font-weight:normal;color:#1e4a5e;letter-spacing:0.155px;text-decoration:underline;">Dx &amp; Billing</div>
<div class="t" style="left:426.7px;top:417px;font-size:12px;line-height:14px;font-weight:normal;color:#222;letter-spacing:-0.3px;">5564</div>
<div class="t" style="left:501px;top:416px;font-size:13px;line-height:16px;font-weight:bold;color:#1e4a5e;letter-spacing:0.1px;text-decoration:underline;">BROWN, Joe</div>
<svg class="b" style="left:629.5px;top:411px" width="23" height="25" viewBox="0 0 23 25"><path d="M3.8,9.8 C1.2,9.8 0.2,12.5 0.3,15.3 C0.4,18.5 1.8,21 4.3,21 C6.3,21 7.4,19.3 6.8,17.6 C6.3,16.3 6.4,15 7.1,13.8 C8,12 6.5,9.8 3.8,9.8 Z" fill="#000"/><path d="M12.9,9.8 C15.5,9.8 16.6,12.5 16.5,15.3 C16.4,18.5 15,21 12.5,21 C10.5,21 9.4,19.3 10,17.6 C10.5,16.3 10.4,15 9.7,13.8 C8.8,12 10.3,9.8 12.9,9.8 Z" fill="#000"/><path d="M7,14.5 C7.8,15.5 8.2,16 8.4,17 M9.8,14.5 C9,15.5 8.6,16 8.4,17" stroke="#aaa" stroke-width="1.1" fill="none"/><rect x="7.4" y="16.5" width="2" height="7.5" fill="#6f6f6f"/><path d="M13,11 L16.9,1 L18.9,1 L22.8,11 L20.6,11 L19.7,8.6 L16.1,8.6 L15.2,11 Z M16.7,6.8 L19.1,6.8 L17.9,3.6 Z" fill="#8b0a0a"/></svg>
<div class="t" style="left:728.9px;top:417px;font-size:12px;line-height:14px;font-weight:normal;color:#222;">1234</div>
<div class="t" style="left:776.8px;top:417px;font-size:12px;line-height:14px;font-weight:normal;color:#222;letter-spacing:0.056px;">12/28/2017</div>
<div class="t" style="left:906.9px;top:417px;font-size:12px;line-height:14px;font-weight:normal;color:#222;letter-spacing:-0.38px;">Gray, Rohan</div>
<div class="t" style="left:1024.7px;top:417px;font-size:12px;line-height:14px;font-weight:normal;color:#222;letter-spacing:-0.565px;">JESTER, BOBBY [Write-In]</div>
<svg class="b" style="left:1205px;top:413px" width="14" height="16" viewBox="0 0 14 16"><defs><linearGradient id="pg12050_4130" x1="0" y1="0" x2="0" y2="1"><stop offset="0" stop-color="#c9f3b9"/><stop offset="0.45" stop-color="#86dc6c"/><stop offset="1" stop-color="#3f9e31"/></linearGradient><radialGradient id="ph12050_4130" cx="45%" cy="35%" r="65%"><stop offset="0" stop-color="#e6fbe0"/><stop offset="0.6" stop-color="#7fd566"/><stop offset="1" stop-color="#3c9a2e"/></radialGradient></defs><path d="M4.6,8.2 C3.4,9 2.6,10 1.6,11 C0.3,12.2 0.2,14.5 1.8,15.2 C3,15.7 5,15.8 7,15.8 C9,15.8 11,15.7 12.2,15.2 C13.8,14.5 13.7,12.2 12.4,11 C11.4,10 10.6,9 9.4,8.2 Z" fill="url(#pg12050_4130)" stroke="#2f8a24" stroke-width="0.8"/><circle cx="7" cy="4.2" r="3.7" fill="url(#ph12050_4130)" stroke="#2f8a24" stroke-width="0.8"/></svg>
<svg class="b" style="left:202px;top:448px" width="13" height="13" viewBox="0 0 13 13"><defs><linearGradient id="cbg" x1="0" y1="0" x2="1" y2="1"><stop offset="0" stop-color="#eceef1"/><stop offset="1" stop-color="#c3c7ce"/></linearGradient></defs><rect x="0.5" y="0.5" width="12" height="12" fill="#fff" stroke="#555a60"/><rect x="2" y="2" width="9" height="9" fill="url(#cbg)"/></svg>
<svg class="b" style="left:237px;top:446px" width="16" height="9" viewBox="0 0 16 9"><defs><linearGradient id="tgred237446" x1="0" y1="0" x2="1" y2="0"><stop offset="0" stop-color="#f47c7c"/><stop offset="1" stop-color="#d62a2a"/></linearGradient></defs><path d="M0.6,4.5 L4.5,0.6 L15.4,0.6 L15.4,8.4 L4.5,8.4 Z" fill="url(#tgred237446)" stroke="#9e1a1a" stroke-width="1.1"/><circle cx="4.3" cy="4.5" r="0.9" fill="#5a2a2a"/></svg>
<div class="t" style="left:269.4px;top:448px;font-size:12px;line-height:14px;font-weight:normal;color:#1e4a5e;letter-spacing:-0.2px;text-decoration:underline;">Edit Census</div>
<div class="t" style="left:348px;top:448px;font-size:12px;line-height:14px;font-weight:normal;color:#1e4a5e;letter-spacing:0.155px;text-decoration:underline;">Dx &amp; Billing</div>
<div class="t" style="left:426.7px;top:448px;font-size:12px;line-height:14px;font-weight:normal;color:#222;"></div>
<div class="t" style="left:501px;top:447px;font-size:13px;line-height:16px;font-weight:bold;color:#1e4a5e;letter-spacing:-0.073px;text-decoration:underline;">GRIFFIN, Emanuel</div>
<div class="t" style="left:728.9px;top:448px;font-size:12px;line-height:14px;font-weight:normal;color:#222;">537</div>
<div class="t" style="left:776.8px;top:448px;font-size:12px;line-height:14px;font-weight:normal;color:#222;letter-spacing:0.056px;">12/28/2017</div>
<div class="t" style="left:906.9px;top:448px;font-size:12px;line-height:14px;font-weight:normal;color:#222;letter-spacing:-0.38px;">Gray, Rohan</div>
<div class="t" style="left:1024.7px;top:448px;font-size:12px;line-height:14px;font-weight:normal;color:#222;letter-spacing:-0.364px;">HALES, NATHAN W</div>
<svg class="b" style="left:1205px;top:444px" width="14" height="16" viewBox="0 0 14 16"><path d="M4.6,8.2 C3.4,9 2.6,10 1.6,11 C0.3,12.2 0.2,14.5 1.8,15.2 C3,15.7 5,15.8 7,15.8 C9,15.8 11,15.7 12.2,15.2 C13.8,14.5 13.7,12.2 12.4,11 C11.4,10 10.6,9 9.4,8.2 Z" fill="#d9d9d9" /><circle cx="7" cy="4.2" r="3.7" fill="#d9d9d9" /></svg>
<svg class="b" style="left:202px;top:478px" width="13" height="13" viewBox="0 0 13 13"><defs><linearGradient id="cbg" x1="0" y1="0" x2="1" y2="1"><stop offset="0" stop-color="#eceef1"/><stop offset="1" stop-color="#c3c7ce"/></linearGradient></defs><rect x="0.5" y="0.5" width="12" height="12" fill="#fff" stroke="#555a60"/><rect x="2" y="2" width="9" height="9" fill="url(#cbg)"/></svg>
<svg class="b" style="left:237px;top:478px" width="16" height="9" viewBox="0 0 16 9"><defs><linearGradient id="tgred237478" x1="0" y1="0" x2="1" y2="0"><stop offset="0" stop-color="#f47c7c"/><stop offset="1" stop-color="#d62a2a"/></linearGradient></defs><path d="M0.6,4.5 L4.5,0.6 L15.4,0.6 L15.4,8.4 L4.5,8.4 Z" fill="url(#tgred237478)" stroke="#9e1a1a" stroke-width="1.1"/><circle cx="4.3" cy="4.5" r="0.9" fill="#5a2a2a"/></svg>
<div class="t" style="left:269.4px;top:479px;font-size:12px;line-height:14px;font-weight:normal;color:#1e4a5e;letter-spacing:-0.2px;text-decoration:underline;">Edit Census</div>
<div class="t" style="left:348px;top:479px;font-size:12px;line-height:14px;font-weight:normal;color:#1e4a5e;letter-spacing:0.155px;text-decoration:underline;">Dx &amp; Billing</div>
<div class="t" style="left:426.7px;top:479px;font-size:12px;line-height:14px;font-weight:normal;color:#222;">1598</div>
<div class="t" style="left:501px;top:478px;font-size:13px;line-height:16px;font-weight:bold;color:#1e4a5e;letter-spacing:0.28px;text-decoration:underline;">BROWN, Paul</div>
<svg class="b" style="left:629.5px;top:473px" width="23" height="25" viewBox="0 0 23 25"><path d="M3.8,9.8 C1.2,9.8 0.2,12.5 0.3,15.3 C0.4,18.5 1.8,21 4.3,21 C6.3,21 7.4,19.3 6.8,17.6 C6.3,16.3 6.4,15 7.1,13.8 C8,12 6.5,9.8 3.8,9.8 Z" fill="#000"/><path d="M12.9,9.8 C15.5,9.8 16.6,12.5 16.5,15.3 C16.4,18.5 15,21 12.5,21 C10.5,21 9.4,19.3 10,17.6 C10.5,16.3 10.4,15 9.7,13.8 C8.8,12 10.3,9.8 12.9,9.8 Z" fill="#000"/><path d="M7,14.5 C7.8,15.5 8.2,16 8.4,17 M9.8,14.5 C9,15.5 8.6,16 8.4,17" stroke="#aaa" stroke-width="1.1" fill="none"/><rect x="7.4" y="16.5" width="2" height="7.5" fill="#6f6f6f"/><path d="M13,11 L16.9,1 L18.9,1 L22.8,11 L20.6,11 L19.7,8.6 L16.1,8.6 L15.2,11 Z M16.7,6.8 L19.1,6.8 L17.9,3.6 Z" fill="#8b0a0a"/></svg>
<div class="t" style="left:658.2px;top:477px;font-size:12px;line-height:14px;font-weight:normal;color:#222;letter-spacing:-0.8px;">, SELF PAY</div>
<div class="t" style="left:728.9px;top:479px;font-size:12px;line-height:14px;font-weight:normal;color:#222;">7</div>
<div class="t" style="left:776.8px;top:479px;font-size:12px;line-height:14px;font-weight:normal;color:#222;letter-spacing:0.056px;">12/28/2017</div>
<div class="t" style="left:906.9px;top:479px;font-size:12px;line-height:14px;font-weight:normal;color:#222;letter-spacing:-0.38px;">Gray, Rohan</div>
<div class="t" style="left:1024.7px;top:479px;font-size:12px;line-height:14px;font-weight:normal;color:#222;letter-spacing:-0.53px;">HOSPENTHAL, MARIA ANGELA</div>
<svg class="b" style="left:1205px;top:475px" width="14" height="16" viewBox="0 0 14 16"><defs><linearGradient id="pg12050_4750" x1="0" y1="0" x2="0" y2="1"><stop offset="0" stop-color="#c9f3b9"/><stop offset="0.45" stop-color="#86dc6c"/><stop offset="1" stop-color="#3f9e31"/></linearGradient><radialGradient id="ph12050_4750" cx="45%" cy="35%" r="65%"><stop offset="0" stop-color="#e6fbe0"/><stop offset="0.6" stop-color="#7fd566"/><stop offset="1" stop-color="#3c9a2e"/></radialGradient></defs><path d="M4.6,8.2 C3.4,9 2.6,10 1.6,11 C0.3,12.2 0.2,14.5 1.8,15.2 C3,15.7 5,15.8 7,15.8 C9,15.8 11,15.7 12.2,15.2 C13.8,14.5 13.7,12.2 12.4,11 C11.4,10 10.6,9 9.4,8.2 Z" fill="url(#pg12050_4750)" stroke="#2f8a24" stroke-width="0.8"/><circle cx="7" cy="4.2" r="3.7" fill="url(#ph12050_4750)" stroke="#2f8a24" stroke-width="0.8"/></svg>
<svg class="b" style="left:202px;top:510px" width="13" height="13" viewBox="0 0 13 13"><defs><linearGradient id="cbg" x1="0" y1="0" x2="1" y2="1"><stop offset="0" stop-color="#eceef1"/><stop offset="1" stop-color="#c3c7ce"/></linearGradient></defs><rect x="0.5" y="0.5" width="12" height="12" fill="#fff" stroke="#555a60"/><rect x="2" y="2" width="9" height="9" fill="url(#cbg)"/></svg>
<svg class="b" style="left:237px;top:508px" width="16" height="9" viewBox="0 0 16 9"><defs><linearGradient id="tgred237508" x1="0" y1="0" x2="1" y2="0"><stop offset="0" stop-color="#f47c7c"/><stop offset="1" stop-color="#d62a2a"/></linearGradient></defs><path d="M0.6,4.5 L4.5,0.6 L15.4,0.6 L15.4,8.4 L4.5,8.4 Z" fill="url(#tgred237508)" stroke="#9e1a1a" stroke-width="1.1"/><circle cx="4.3" cy="4.5" r="0.9" fill="#5a2a2a"/></svg>
<div class="t" style="left:269.4px;top:510px;font-size:12px;line-height:14px;font-weight:normal;color:#1e4a5e;letter-spacing:-0.2px;text-decoration:underline;">Edit Census</div>
<div class="t" style="left:348px;top:510px;font-size:12px;line-height:14px;font-weight:normal;color:#1e4a5e;letter-spacing:0.155px;text-decoration:underline;">Dx &amp; Billing</div>
<div class="t" style="left:426.7px;top:510px;font-size:12px;line-height:14px;font-weight:normal;color:#222;">144</div>
<div class="t" style="left:501px;top:509px;font-size:13px;line-height:16px;font-weight:bold;color:#1e4a5e;letter-spacing:-0.175px;text-decoration:underline;">WEBER, Gordon</div>
<div class="t" style="left:728.9px;top:510px;font-size:12px;line-height:14px;font-weight:normal;color:#222;letter-spacing:-0.85px;">757</div>
<div class="t" style="left:776.8px;top:510px;font-size:12px;line-height:14px;font-weight:normal;color:#222;letter-spacing:0.056px;">12/28/2017</div>
<div class="t" style="left:906.9px;top:510px;font-size:12px;line-height:14px;font-weight:normal;color:#222;letter-spacing:-0.38px;">Gray, Rohan</div>
<div class="t" style="left:1024.7px;top:510px;font-size:12px;line-height:14px;font-weight:normal;color:#222;letter-spacing:-0.555px;">GREEN, PETER [Write-In]</div>
<svg class="b" style="left:1205px;top:506px" width="14" height="16" viewBox="0 0 14 16"><defs><linearGradient id="pg12050_5060" x1="0" y1="0" x2="0" y2="1"><stop offset="0" stop-color="#c9f3b9"/><stop offset="0.45" stop-color="#86dc6c"/><stop offset="1" stop-color="#3f9e31"/></linearGradient><radialGradient id="ph12050_5060" cx="45%" cy="35%" r="65%"><stop offset="0" stop-color="#e6fbe0"/><stop offset="0.6" stop-color="#7fd566"/><stop offset="1" stop-color="#3c9a2e"/></radialGradient></defs><path d="M4.6,8.2 C3.4,9 2.6,10 1.6,11 C0.3,12.2 0.2,14.5 1.8,15.2 C3,15.7 5,15.8 7,15.8 C9,15.8 11,15.7 12.2,15.2 C13.8,14.5 13.7,12.2 12.4,11 C11.4,10 10.6,9 9.4,8.2 Z" fill="url(#pg12050_5060)" stroke="#2f8a24" stroke-width="0.8"/><circle cx="7" cy="4.2" r="3.7" fill="url(#ph12050_5060)" stroke="#2f8a24" stroke-width="0.8"/></svg>
<svg class="b" style="left:202px;top:538px" width="13" height="13" viewBox="0 0 13 13"><defs><linearGradient id="cbg" x1="0" y1="0" x2="1" y2="1"><stop offset="0" stop-color="#eceef1"/><stop offset="1" stop-color="#c3c7ce"/></linearGradient></defs><rect x="0.5" y="0.5" width="12" height="12" fill="#fff" stroke="#555a60"/><rect x="2" y="2" width="9" height="9" fill="url(#cbg)"/></svg>
<svg class="b" style="left:237px;top:536px" width="16" height="9" viewBox="0 0 16 9"><defs><linearGradient id="tgred237536" x1="0" y1="0" x2="1" y2="0"><stop offset="0" stop-color="#f47c7c"/><stop offset="1" stop-color="#d62a2a"/></linearGradient></defs><path d="M0.6,4.5 L4.5,0.6 L15.4,0.6 L15.4,8.4 L4.5,8.4 Z" fill="url(#tgred237536)" stroke="#9e1a1a" stroke-width="1.1"/><circle cx="4.3" cy="4.5" r="0.9" fill="#5a2a2a"/></svg>
<div class="t" style="left:269.4px;top:538px;font-size:12px;line-height:14px;font-weight:normal;color:#1e4a5e;letter-spacing:-0.2px;text-decoration:underline;">Edit Census</div>
<div class="t" style="left:348px;top:538px;font-size:12px;line-height:14px;font-weight:normal;color:#1e4a5e;letter-spacing:0.155px;text-decoration:underline;">Dx &amp; Billing</div>
<div class="t" style="left:426.7px;top:538px;font-size:12px;line-height:14px;font-weight:normal;color:#222;">131</div>
<div class="t" style="left:501px;top:537px;font-size:13px;line-height:16px;font-weight:bold;color:#1e4a5e;letter-spacing:-0.015px;text-decoration:underline;">TOWNSEND, Jane</div>
<div class="t" style="left:728.9px;top:538px;font-size:12px;line-height:14px;font-weight:normal;color:#222;">765</div>
<div class="t" style="left:776.8px;top:538px;font-size:12px;line-height:14px;font-weight:normal;color:#222;letter-spacing:0.167px;">11/21/2017</div>
<div class="t" style="left:906.9px;top:538px;font-size:12px;line-height:14px;font-weight:normal;color:#222;letter-spacing:-0.071px;">Georgiou, Kimberly</div>
<div class="t" style="left:1024.7px;top:538px;font-size:12px;line-height:14px;font-weight:normal;color:#222;letter-spacing:-0.458px;">HAKIM, SAMUEL</div>
<svg class="b" style="left:1205px;top:534px" width="14" height="16" viewBox="0 0 14 16"><defs><linearGradient id="pg12050_5340" x1="0" y1="0" x2="0" y2="1"><stop offset="0" stop-color="#c9f3b9"/><stop offset="0.45" stop-color="#86dc6c"/><stop offset="1" stop-color="#3f9e31"/></linearGradient><radialGradient id="ph12050_5340" cx="45%" cy="35%" r="65%"><stop offset="0" stop-color="#e6fbe0"/><stop offset="0.6" stop-color="#7fd566"/><stop offset="1" stop-color="#3c9a2e"/></radialGradient></defs><path d="M4.6,8.2 C3.4,9 2.6,10 1.6,11 C0.3,12.2 0.2,14.5 1.8,15.2 C3,15.7 5,15.8 7,15.8 C9,15.8 11,15.7 12.2,15.2 C13.8,14.5 13.7,12.2 12.4,11 C11.4,10 10.6,9 9.4,8.2 Z" fill="url(#pg12050_5340)" stroke="#2f8a24" stroke-width="0.8"/><circle cx="7" cy="4.2" r="3.7" fill="url(#ph12050_5340)" stroke="#2f8a24" stroke-width="0.8"/></svg>
<div class="t" style="left:188.7px;top:577px;font-size:11px;line-height:13px;font-weight:bold;color:#555;">Legend</div>
<svg class="b" style="left:190px;top:595px" width="16" height="9" viewBox="0 0 16 9"><defs><linearGradient id="tgred190595" x1="0" y1="0" x2="1" y2="0"><stop offset="0" stop-color="#f47c7c"/><stop offset="1" stop-color="#d62a2a"/></linearGradient></defs><path d="M0.6,4.5 L4.5,0.6 L15.4,0.6 L15.4,8.4 L4.5,8.4 Z" fill="url(#tgred190595)" stroke="#9e1a1a" stroke-width="1.1"/><circle cx="4.3" cy="4.5" r="0.9" fill="#5a2a2a"/></svg>
<div class="t" style="left:219.6px;top:596px;font-size:11px;line-height:13px;font-weight:normal;color:#555;letter-spacing:0.043px;">Patient does not have a charge for selected date</div>
<svg class="b" style="left:190px;top:616px" width="16" height="9" viewBox="0 0 16 9"><defs><linearGradient id="tgyellow190616" x1="0" y1="0" x2="1" y2="0"><stop offset="0" stop-color="#fff0c8"/><stop offset="1" stop-color="#f2b24a"/></linearGradient></defs><path d="M0.6,4.5 L4.5,0.6 L15.4,0.6 L15.4,8.4 L4.5,8.4 Z" fill="url(#tgyellow190616)" stroke="#b9801e" stroke-width="1.1"/><circle cx="4.3" cy="4.5" r="0.9" fill="#5a2a2a"/></svg>
<div class="t" style="left:219.6px;top:617px;font-size:11px;line-height:13px;font-weight:normal;color:#555;letter-spacing:0.017px;">Patient has charge for selected date</div>
<svg class="b" style="left:190px;top:635px" width="14" height="16" viewBox="0 0 14 16"><defs><linearGradient id="pg1900_6350" x1="0" y1="0" x2="0" y2="1"><stop offset="0" stop-color="#c9f3b9"/><stop offset="0.45" stop-color="#86dc6c"/><stop offset="1" stop-color="#3f9e31"/></linearGradient><radialGradient id="ph1900_6350" cx="45%" cy="35%" r="65%"><stop offset="0" stop-color="#e6fbe0"/><stop offset="0.6" stop-color="#7fd566"/><stop offset="1" stop-color="#3c9a2e"/></radialGradient></defs><path d="M4.6,8.2 C3.4,9 2.6,10 1.6,11 C0.3,12.2 0.2,14.5 1.8,15.2 C3,15.7 5,15.8 7,15.8 C9,15.8 11,15.7 12.2,15.2 C13.8,14.5 13.7,12.2 12.4,11 C11.4,10 10.6,9 9.4,8.2 Z" fill="url(#pg1900_6350)" stroke="#2f8a24" stroke-width="0.8"/><circle cx="7" cy="4.2" r="3.7" fill="url(#ph1900_6350)" stroke="#2f8a24" stroke-width="0.8"/></svg>
<div class="t" style="left:219.6px;top:639px;font-size:11px;line-height:13px;font-weight:normal;color:#555;">Currently in a dialysis unit</div>
<svg class="b" style="left:190.5px;top:658.5px" width="23" height="25" viewBox="0 0 23 25"><path d="M3.8,9.8 C1.2,9.8 0.2,12.5 0.3,15.3 C0.4,18.5 1.8,21 4.3,21 C6.3,21 7.4,19.3 6.8,17.6 C6.3,16.3 6.4,15 7.1,13.8 C8,12 6.5,9.8 3.8,9.8 Z" fill="#000"/><path d="M12.9,9.8 C15.5,9.8 16.6,12.5 16.5,15.3 C16.4,18.5 15,21 12.5,21 C10.5,21 9.4,19.3 10,17.6 C10.5,16.3 10.4,15 9.7,13.8 C8.8,12 10.3,9.8 12.9,9.8 Z" fill="#000"/><path d="M7,14.5 C7.8,15.5 8.2,16 8.4,17 M9.8,14.5 C9,15.5 8.6,16 8.4,17" stroke="#aaa" stroke-width="1.1" fill="none"/><rect x="7.4" y="16.5" width="2" height="7.5" fill="#6f6f6f"/><path d="M13,11 L16.9,1 L18.9,1 L22.8,11 L20.6,11 L19.7,8.6 L16.1,8.6 L15.2,11 Z M16.7,6.8 L19.1,6.8 L17.9,3.6 Z" fill="#8b0a0a"/></svg>
<div class="t" style="left:219.6px;top:666px;font-size:11px;line-height:13px;font-weight:normal;color:#555;letter-spacing:-0.094px;"><b>Acute:</b> Patient's Dialysis Start Reason is Acute.</div>
<svg class="b" style="left:190.6px;top:688.6px" width="25" height="27" viewBox="0 0 25 27"><g><path d="M5.3,10.3 C2.3,12.2 0.6,15.5 1.2,19.2 C1.8,22.6 5.3,25 9.2,26.3 C8.4,24.6 6.5,22.2 5.1,19.6 C4,17.2 4.3,13.6 6.6,10.6 Z" fill="#c7a579"/><path d="M19.7,10.3 C22.7,12.2 24.4,15.5 23.8,19.2 C23.2,22.6 19.7,25 15.8,26.3 C16.6,24.6 18.5,22.2 19.9,19.6 C21,17.2 20.7,13.6 18.4,10.6 Z" fill="#c7a579"/><path d="M12.4,1.4 C9.5,0.6 5,1 0.1,3.8 C3,5.2 6.5,5.8 10.5,6.1 L12.4,6.1 Z" fill="#111"/><path d="M12.6,1.4 C15.5,0.6 20,1 24.9,3.8 C22,5.2 18.5,5.8 14.5,6.1 L12.6,6.1 Z" fill="#111"/><rect x="11.8" y="1.2" width="1.1" height="23.5" fill="#8a8a8a"/><ellipse cx="12.4" cy="8.5" rx="4.4" ry="1.0" fill="none" stroke="#111" stroke-width="1.5"/><ellipse cx="12.4" cy="12.85" rx="3.0" ry="1.5" fill="none" stroke="#111" stroke-width="1.5"/><ellipse cx="12.4" cy="17.3" rx="2.1" ry="1.2" fill="none" stroke="#111" stroke-width="1.5"/><ellipse cx="12.4" cy="20.65" rx="1.6" ry="1.0" fill="none" stroke="#111" stroke-width="1.5"/><ellipse cx="12.4" cy="23.7" rx="1.3" ry="0.7" fill="none" stroke="#b0b0b0" stroke-width="1.5"/></g></svg>
<div class="t" style="left:219.4px;top:698px;font-size:11px;line-height:13px;font-weight:normal;color:#555;letter-spacing:-0.157px;"><b>ESCO:</b> Patient is enrolled in the ESCO (ESRD Seamless Care Organization) program.</div>
<svg class="b" style="left:190.6px;top:720.5px" width="25" height="27" viewBox="0 0 25 27"><g><path d="M5.3,10.3 C2.3,12.2 0.6,15.5 1.2,19.2 C1.8,22.6 5.3,25 9.2,26.3 C8.4,24.6 6.5,22.2 5.1,19.6 C4,17.2 4.3,13.6 6.6,10.6 Z" fill="#c7a579"/><path d="M19.7,10.3 C22.7,12.2 24.4,15.5 23.8,19.2 C23.2,22.6 19.7,25 15.8,26.3 C16.6,24.6 18.5,22.2 19.9,19.6 C21,17.2 20.7,13.6 18.4,10.6 Z" fill="#c7a579"/><path d="M12.4,1.4 C9.5,0.6 5,1 0.1,3.8 C3,5.2 6.5,5.8 10.5,6.1 L12.4,6.1 Z" fill="#c42020"/><path d="M12.6,1.4 C15.5,0.6 20,1 24.9,3.8 C22,5.2 18.5,5.8 14.5,6.1 L12.6,6.1 Z" fill="#c42020"/><rect x="11.8" y="1.2" width="1.1" height="23.5" fill="#8a8a8a"/><ellipse cx="12.4" cy="8.5" rx="4.4" ry="1.0" fill="none" stroke="#c42020" stroke-width="1.5"/><ellipse cx="12.4" cy="12.85" rx="3.0" ry="1.5" fill="none" stroke="#c42020" stroke-width="1.5"/><ellipse cx="12.4" cy="17.3" rx="2.1" ry="1.2" fill="none" stroke="#c42020" stroke-width="1.5"/><ellipse cx="12.4" cy="20.65" rx="1.6" ry="1.0" fill="none" stroke="#c42020" stroke-width="1.5"/><ellipse cx="12.4" cy="23.7" rx="1.3" ry="0.7" fill="none" stroke="#b0b0b0" stroke-width="1.5"/></g></svg>
<div class="t" style="left:219.4px;top:729px;font-size:11px;line-height:13px;font-weight:normal;color:#555;letter-spacing:-0.024px;"><b>ESCO TCMS (1-7 Days):</b> ESCO Patient requires a TCMS (Transition Care Management Service) due to being discharged from the hospital 1 - 7 days ago.</div>
<div class="b" style="left:1486px;top:0px;width:17px;height:740px;background:#f0f1f3;"></div>
<svg class="b" style="left:1486px;top:0px" width="17" height="32" viewBox="0 0 17 32"><polyline points="3.5,23.5 8.5,18 13.5,23.5" fill="none" stroke="#7a7a7a" stroke-width="2.6"/></svg>
<div class="b" style="left:1486px;top:32px;width:17px;height:501px;box-sizing:border-box;border:1px solid #5b84c4;background:#c9d0da;"></div>
<svg class="b" style="left:1486px;top:708px" width="17" height="20" viewBox="0 0 17 20"><polyline points="3.5,7.5 8.5,13 13.5,7.5" fill="none" stroke="#7a7a7a" stroke-width="2.6"/></svg>
<div class="b" style="left:1px;top:740px;width:1502px;height:17px;background:#f0f1f3;"></div>
<svg class="b" style="left:1px;top:740px" width="33" height="17" viewBox="0 0 33 17"><polyline points="25,3.5 19.5,8.5 25,13.5" fill="none" stroke="#7a7a7a" stroke-width="2.6"/></svg>
<div class="b" style="left:34px;top:740px;width:1406px;height:17px;box-sizing:border-box;border:1px solid #5b84c4;background:#c9d0da;"></div>
<svg class="b" style="left:1440px;top:740px" width="46" height="17" viewBox="0 0 46 17"><polyline points="21,3.5 27,8.5 21,13.5" fill="none" stroke="#7a7a7a" stroke-width="2.6"/></svg>
<div class="b" style="left:0px;top:0px;width:1px;height:758px;background:#1a7fd8;"></div>
<div class="b" style="left:1503px;top:0px;width:1px;height:758px;background:#1a7fd8;"></div>
<div class="b" style="left:0px;top:757px;width:1504px;height:1px;background:#1a7fd8;"></div>
</body></html>
